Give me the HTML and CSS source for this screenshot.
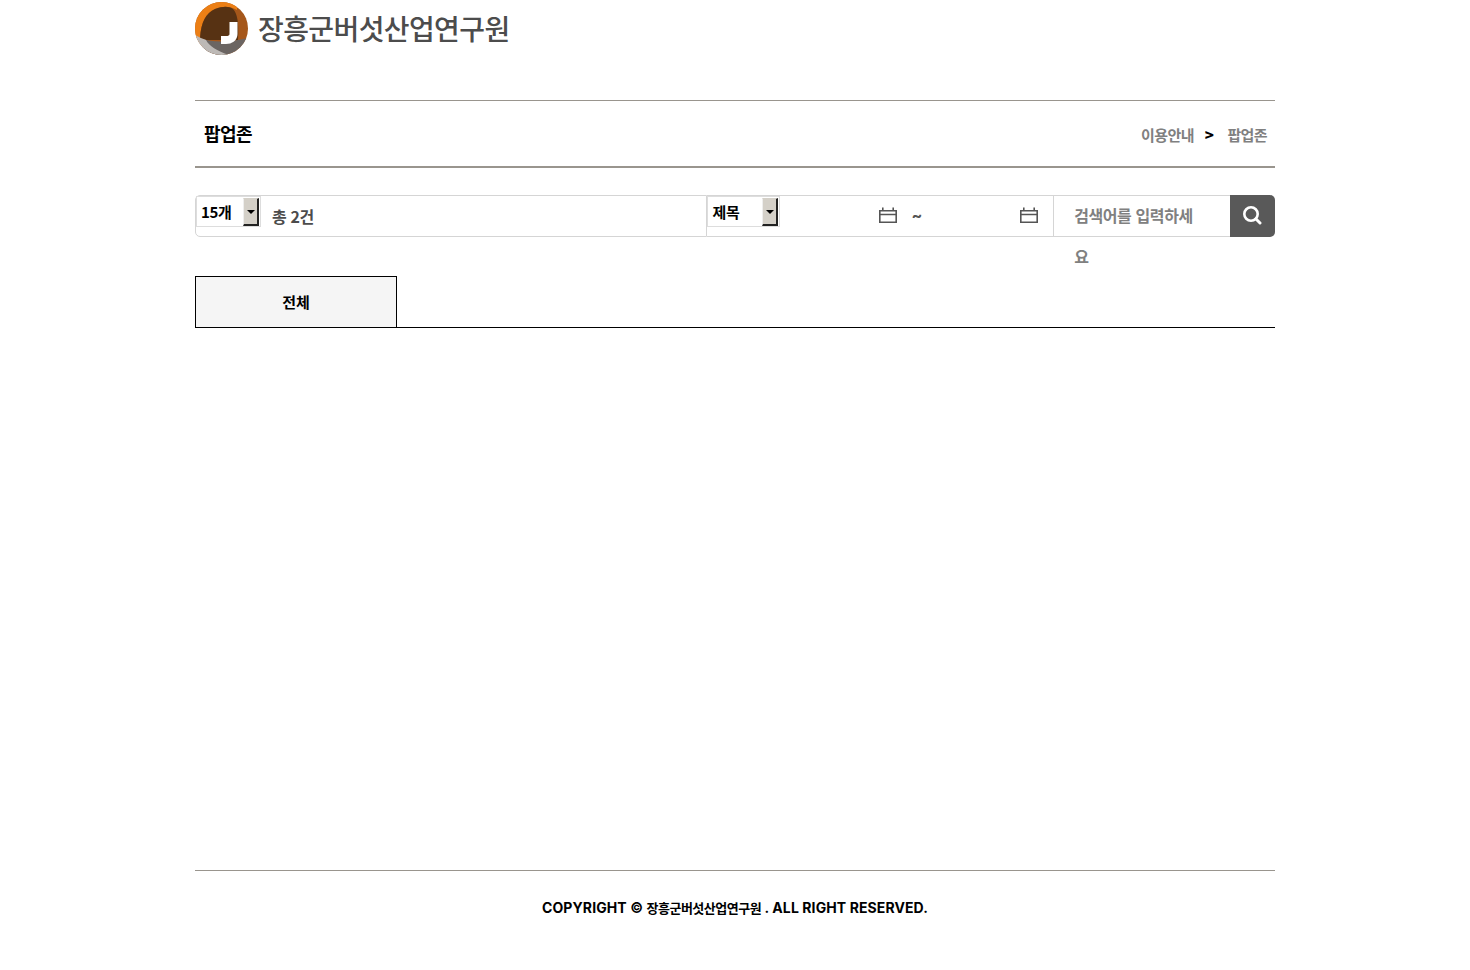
FILE: index.html
```html
<!DOCTYPE html>
<html lang="ko">
<head>
    <meta charset="utf-8">
    <title>팝업존</title>
    <link rel="stylesheet" href="styles.css">
</head>
<body>
    <div class="wrap">
        <header class="site-header">
            <a class="logo" href="#">
                <svg class="logo-mark" width="53" height="53" viewBox="0 0 53 53">
                    <defs>
                        <clipPath id="disc"><circle cx="26.5" cy="26.5" r="26.5"/></clipPath>
                    </defs>
                    <g clip-path="url(#disc)">
                        <rect width="53" height="53" fill="#a5571a"/>
                        <path d="M0 0H42V8C34 4 28 4 20 7C11 11 6 20 5 36H0Z" fill="#ec7f15"/>
                        <path d="M20 7C28 4 34 4 38 7C42 11 44 20 43 38H12C9 38 7 37 5 36C6 20 11 11 20 7Z" fill="#573213"/>
                        <path d="M8 37C16 40 32 41 53 36V53H8Z" fill="#6b6562"/>
                        <path d="M0 33C4 35 8 37 11 38C14 44 22 49 34 53H0Z" fill="#bdb9b6"/>
                    </g>
                    <path d="M38.500 20V32C38.500 36 35 38 31 38H26" fill="none" stroke="#fff" stroke-width="8" stroke-linejoin="round"/>
                </svg>
                <span class="logo-text">장흥군버섯산업연구원</span>
            </a>
        </header>

        <div class="page-title">
            <h2>팝업존</h2>
            <div class="crumbs">
                <span>이용안내</span>
                <b>&gt;</b>
                <span>팝업존</span>
            </div>
        </div>

        <form class="search-bar">
            <div class="search-left">
                <div class="fake-select count-select">
                    <span class="fake-value">15개</span>
                    <span class="fake-btn"></span>
                </div>
                <span class="total">총 2건</span>
            </div>
            <div class="search-right">
                <div class="fake-select field-select">
                    <span class="fake-value">제목</span>
                    <span class="fake-btn"></span>
                </div>
                <div class="dates">
                    <svg class="cal" width="18" height="16" viewBox="0 0 18 16">
                        <path d="M.8 3.800H17.200V15.200H.8ZM.8 7.500H17.200M3.800 .5V3.800M14.200 .5V3.800" fill="none" stroke="#555" stroke-width="1.6"/>
                    </svg>
                    <span class="tilde">~</span>
                    <svg class="cal" width="18" height="16" viewBox="0 0 18 16">
                        <path d="M.8 3.800H17.200V15.200H.8ZM.8 7.500H17.200M3.800 .5V3.800M14.200 .5V3.800" fill="none" stroke="#555" stroke-width="1.6"/>
                    </svg>
                </div>
            </div>
            <div class="keyword">검색어를 입력하세요</div>
            <button class="search-btn" type="button" aria-label="검색">
                <svg width="20" height="20" viewBox="0 0 20 20">
                    <circle cx="9" cy="9" r="6.700" fill="none" stroke="#fff" stroke-width="2.600"/>
                    <path d="M14 14L18 18" stroke="#fff" stroke-width="3" stroke-linecap="round"/>
                </svg>
            </button>
        </form>

        <ul class="tabs">
            <li class="tab active">전체</li>
        </ul>

        <div class="content"></div>

        <footer class="site-footer">COPYRIGHT © <span class="org">장흥군버섯산업연구원</span> . ALL RIGHT RESERVED.</footer>
    </div>
</body>
</html>
```

FILE: styles.css
```css
* {
    box-sizing: border-box;
}

body {
    margin: 0;
    background: #fff;
    color: #000;
    font-family: Inter, 'Noto Sans CJK KR', sans-serif;
}

.wrap {
    width: 1080px;
    margin: 0 auto;
}

/* header */
.site-header {
    height: 100px;
    padding-top: 2px;
}

.logo {
    display: flex;
    align-items: center;
    height: 53px;
    text-decoration: none;
}

.logo-text {
    margin: -2px 0 0 10px;
    font-family: 'Noto Sans CJK KR', sans-serif;
    font-size: 28px;
    font-weight: 500;
    letter-spacing: -.6px;
    color: #4c4c4c;
}

/* title */
.page-title {
    display: flex;
    justify-content: space-between;
    align-items: center;
    height: 68px;
    padding: 0 8px 0 9px;
    border-top: 1px solid #99958e;
    border-bottom: 2px solid #99958e;
}

.page-title h2 {
    margin: -2px 0 0;
    font-family: 'Noto Sans CJK KR', sans-serif;
    font-size: 18px;
    font-weight: 700;
    letter-spacing: -.5px;
}

.crumbs {
    display: flex;
    align-items: center;
    margin-top: 1px;
    font-family: 'Noto Sans CJK KR', sans-serif;
    font-size: 15px;
    font-weight: 700;
    letter-spacing: -.6px;
    color: #808080;
}

.crumbs b {
    margin: 0 14px 0 11px;
    color: #000;
}

/* search */
.search-bar {
    display: flex;
    height: 42px;
    margin-top: 27px;
}

.search-left {
    display: flex;
    align-items: flex-start;
    width: 512px;
    border: 1px solid #d5d5d5;
    border-radius: 5px 0 0 5px;
}

.search-right {
    display: flex;
    align-items: flex-start;
    width: 347px;
    border-top: 1px solid #d5d5d5;
    border-bottom: 1px solid #d5d5d5;
}

.fake-select {
    display: flex;
    justify-content: space-between;
    height: 31px;
    padding: 1px 1px 1px 4px;
    border: 1px solid #ddd;
    font-family: 'Noto Sans CJK KR', sans-serif;
    font-size: 15px;
    font-weight: 700;
    letter-spacing: -.4px;
}

.fake-value {
    line-height: 28px;
}

.count-select {
    width: 65px;
}

.field-select {
    width: 73px;
    padding-left: 5px;
}

.fake-btn {
    position: relative;
    width: 16px;
    height: 28px;
    background: #d4d0c8;
    border-top: 1px solid #d4d0c8;
    border-left: 1px solid #eee;
    border-right: 2px solid #222;
    border-bottom: 2px solid #222;
}

.fake-btn::after {
    content: "";
    position: absolute;
    left: 3px;
    top: 11px;
    border: 4px solid transparent;
    border-top-color: #000;
    border-bottom-width: 0;
}

.total {
    margin-left: 11px;
    font-family: 'Noto Sans CJK KR', sans-serif;
    font-size: 16px;
    font-weight: 700;
    line-height: 40px;
    letter-spacing: -.4px;
    color: #4c4c4c;
}

.dates {
    display: flex;
    align-items: center;
    height: 38px;
    margin-left: 99px;
}

.tilde {
    width: 123px;
    padding-left: 15px;
    font-size: 16px;
    font-weight: 700;
    line-height: 38px;
    color: #555;
}

.keyword {
    width: 177px;
    height: 42px;
    padding: 0 36px 0 20px;
    border-bottom: 1px solid #d5d5d5;
    border-left: 1px solid #d5d5d5;
    box-shadow: inset 0 1px 0 #d5d5d5;
    font-family: 'Noto Sans CJK KR', sans-serif;
    font-size: 16px;
    font-weight: 700;
    line-height: 41px;
    letter-spacing: -.4px;
    color: #808080;
}

.search-btn {
    display: flex;
    justify-content: center;
    align-items: center;
    width: 45px;
    height: 42px;
    padding: 0 2px 2px 0;
    border: 0;
    border-radius: 0 5px 5px 0;
    background: #595959;
}

/* tabs */
.tabs {
    display: flex;
    height: 52px;
    margin: 39px 0 0;
    padding: 0;
    border-bottom: 1px solid #000;
    list-style: none;
}

.tab {
    width: 202px;
    height: 52px;
    border: 1px solid #000;
    background: #f5f5f5;
    font-family: 'Noto Sans CJK KR', sans-serif;
    font-size: 15px;
    font-weight: 700;
    line-height: 50px;
    text-align: center;
}

.content {
    height: 542px;
}

/* footer */
.site-footer {
    height: 100px;
    padding-top: 27px;
    border-top: 1px solid #99958e;
    font-size: 14px;
    font-weight: 700;
    letter-spacing: .1px;
    text-align: center;
}

.org {
    font-size: 13px;
    letter-spacing: -.5px;
}
```
